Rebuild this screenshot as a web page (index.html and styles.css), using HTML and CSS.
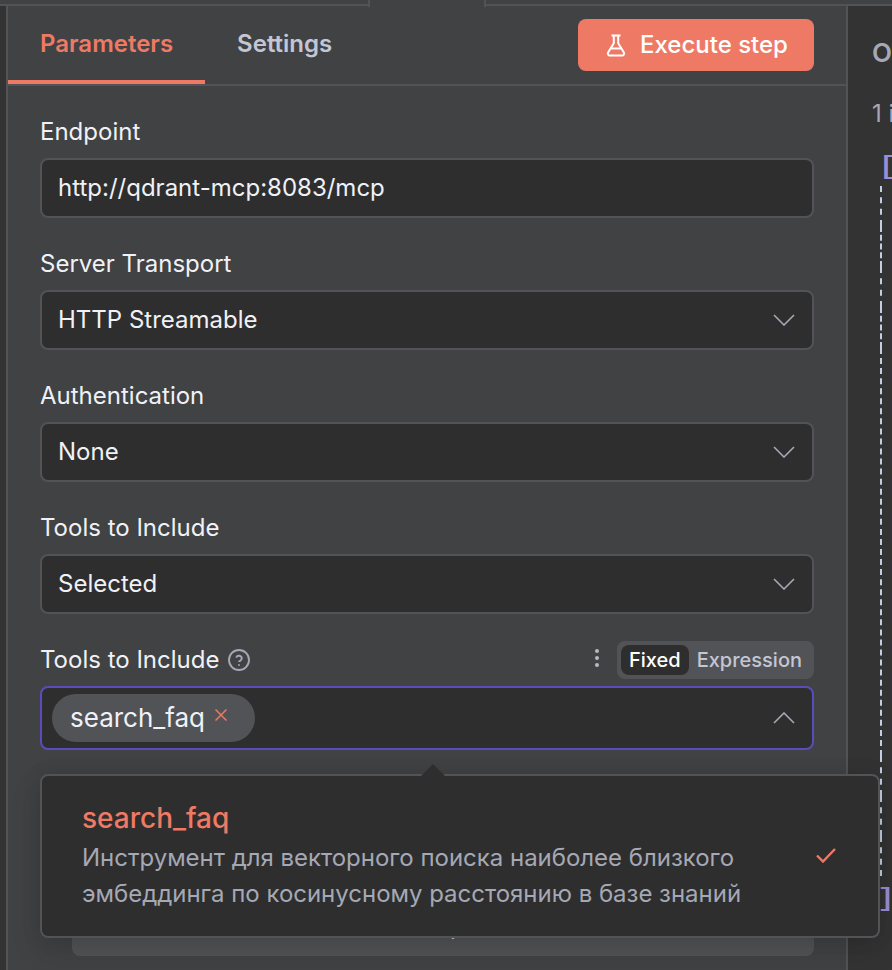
FILE: index.html
```html
<!DOCTYPE html>
<html lang="en">

<head>
  <meta charset="UTF-8" />
  <meta name="viewport" content="width=device-width, initial-scale=1.0" />
  <title>MCP Client Tool</title>
  <link rel="stylesheet" href="styles.css">
</head>

<body>
  <div class="topbar">
    <div class="topbar-line topbar-left"></div>
    <div class="drag-handle"></div>
    <div class="topbar-line topbar-right"></div>
  </div>

  <div class="workspace">
    <div class="input-edge"></div>

    <main class="panel">
      <div class="panel-header">
        <nav class="tabs">
          <a class="tab active">Parameters</a>
          <a class="tab">Settings</a>
        </nav>
        <button class="execute-button">
          <svg class="flask" viewBox="0 0 24 24" width="24" height="24">
            <path d="M7.5 2.6h9M9.8 3v7.2L4.1 19.4a2.1 2.1 0 0 0 1.8 3.1h12.2a2.1 2.1 0 0 0 1.8-3.1L14.2 10.2V3M7 15.5h10" />
          </svg>
          <span>Execute step</span>
        </button>
      </div>

      <div class="form">
        <div class="field">
          <label class="label">Endpoint</label>
          <div class="control">http://qdrant-mcp:8083/mcp</div>
        </div>

        <div class="field">
          <label class="label">Server Transport</label>
          <div class="control">
            <span>HTTP Streamable</span>
            <svg class="chevron" viewBox="0 0 22 12" width="22" height="12"><path d="M1 1l10 10L21 1" /></svg>
          </div>
        </div>

        <div class="field">
          <label class="label">Authentication</label>
          <div class="control">
            <span>None</span>
            <svg class="chevron" viewBox="0 0 22 12" width="22" height="12"><path d="M1 1l10 10L21 1" /></svg>
          </div>
        </div>

        <div class="field">
          <label class="label">Tools to Include</label>
          <div class="control">
            <span>Selected</span>
            <svg class="chevron" viewBox="0 0 22 12" width="22" height="12"><path d="M1 1l10 10L21 1" /></svg>
          </div>
        </div>

        <div class="field field-tools">
          <div class="label">
            <span>Tools to Include</span>
            <svg class="help" viewBox="0 0 22 22" width="22" height="22">
              <circle cx="11" cy="11" r="10" />
              <path d="M8.2 8.6a2.9 2.9 0 0 1 5.6.9c0 1.9-2.8 2.3-2.8 3.6M11 15.2v1.6" />
            </svg>
            <svg class="dots" viewBox="0 0 4 18" width="4" height="18">
              <circle cx="2" cy="2" r="2" /><circle cx="2" cy="9" r="2" /><circle cx="2" cy="16" r="2" />
            </svg>
            <div class="switch">
              <span class="switch-item selected">Fixed</span>
              <span class="switch-item">Expression</span>
            </div>
          </div>
          <div class="control focused">
            <span class="tag">
              search_faq
              <svg class="tag-close" viewBox="0 0 12 12" width="12" height="12"><path d="M.5.5l11 11M11.5.5l-11 11" /></svg>
            </span>
            <svg class="chevron" viewBox="0 0 22 12" width="22" height="12"><path d="M1 11L11 1l10 10" /></svg>
          </div>

          <!-- dropdown -->
          <div class="dropdown">
            <div class="option">
              <div class="option-name">search_faq</div>
              <div class="option-description">Инструмент для векторного поиска наиболее близкого эмбеддинга по косинусному расстоянию в базе знаний</div>
            </div>
            <svg class="check" viewBox="0 0 20 15" width="20" height="15"><path d="M1 7.5l6 6L19 1" /></svg>
          </div>
        </div>

        <button class="add-option">Add Option</button>
      </div>
    </main>

    <aside class="output">
      <div class="output-title">OUTPUT</div>
      <div class="output-count">1 item</div>
      <div class="json">
        <span class="bracket">[</span>
        <div class="json-row"></div>
        <div class="json-row tall"></div>
        <div class="json-row"></div>
        <div class="json-row tall"></div>
        <div class="json-row text-row"></div>
        <div class="json-row"></div>
        <div class="json-row"></div>
        <div class="json-row"></div>
        <span class="bracket bracket-close">]</span>
      </div>
    </aside>
  </div>
</body>

</html>
```

FILE: styles.css
```css
* {
  box-sizing: border-box;
}

body {
  margin: 0;
  height: 970px;
  overflow: hidden;
  background: #414244;
  color: #f0f1f7;
  font-family: Inter, sans-serif;
  font-size: 24px;
  line-height: 36px;
}

button {
  border: none;
  font: inherit;
  color: inherit;
}

svg {
  fill: none;
  flex-shrink: 0;
}

/* top edge with the drag handle */
.topbar {
  display: flex;
  height: 6px;
}

.topbar-line {
  border-bottom: 2px solid #525356;
}

.topbar-left {
  width: 368px;
}

.topbar-right {
  flex: 1;
}

.drag-handle {
  width: 118px;
  height: 7px;
  border: solid #525356;
  border-width: 0 2px;
}

.workspace {
  display: flex;
  height: 964px;
}

.input-edge {
  width: 6px;
  background: #333;
}

.panel {
  width: 842px;
  border: solid #525356;
  border-width: 0 2px;
}

.panel-header {
  display: flex;
  justify-content: space-between;
  height: 80px;
  padding-right: 32px;
  border-bottom: 2px solid #525356;
}

.tabs {
  display: flex;
}

.tab {
  height: 78px;
  padding: 20px 32px 0;
  color: #c3c6d4;
  font-weight: 600;
}

.tab.active {
  color: #ee7a66;
  border-bottom: 4px solid #ee7a66;
}

.execute-button {
  display: flex;
  align-items: center;
  gap: 12px;
  width: 236px;
  height: 52px;
  margin-top: 13px;
  padding: 0 26px;
  border-radius: 8px;
  background: #ee7a66;
  color: #fff;
  font-weight: 500;
  white-space: nowrap;
}

.flask {
  stroke: #fff;
  stroke-width: 2;
}

/* parameters */
.form {
  padding: 28px 32px 0;
}

.field {
  margin-bottom: 28px;
}

.label {
  display: flex;
  align-items: center;
  height: 36px;
  margin-bottom: 8px;
}

.control {
  display: flex;
  align-items: center;
  justify-content: space-between;
  height: 60px;
  padding: 0 17px 0 16px;
  border: 2px solid #525356;
  border-radius: 8px;
  background: #2e2e2e;
}

.chevron {
  stroke: #a5a8b5;
  stroke-width: 1.6;
}

.help {
  margin-left: 9px;
  stroke: #a5a8b5;
  stroke-width: 1.9;
}

.dots {
  margin: -4px 18px 0 auto;
  fill: #b5b8c5;
}

.switch {
  display: flex;
  height: 38px;
  padding: 4px;
  border-radius: 8px;
  background: #525356;
  font-size: 20px;
  line-height: 30px;
  font-weight: 500;
}

.switch-item {
  padding: 0 8px;
  border-radius: 8px;
  color: #c3c6d4;
}

.switch-item.selected {
  background: #2e2e2e;
  color: #fff;
}

.field-tools {
  position: relative;
}

.control.focused {
  height: 64px;
  padding-left: 10px;
  border-color: #5a4cba;
}

.tag {
  display: flex;
  align-items: center;
  gap: 10px;
  width: 203px;
  height: 48px;
  padding: 0 0 0 18px;
  border-radius: 24px;
  background: #525356;
  font-size: 26px;
}

.tag-close {
  margin-top: -6px;
  stroke: #ee7a66;
  stroke-width: 1.5;
}

.dropdown {
  position: absolute;
  top: 132px;
  left: 0;
  z-index: 10;
  display: flex;
  align-items: center;
  justify-content: space-between;
  width: 840px;
  height: 164px;
  padding: 0 42px 0 40px;
  border: 2px solid #525356;
  border-radius: 8px;
  background: #2e2e2e;
  box-shadow: 0 12px 32px rgba(0, 0, 0, 0.12), 0 0 20px rgba(0, 0, 0, 0.1);
}

.dropdown::before {
  content: "";
  position: absolute;
  top: -12px;
  left: 379px;
  border: solid transparent;
  border-width: 0 12px 12px;
  border-bottom-color: #2e2e2e;
}

.option {
  width: 680px;
  padding-bottom: 3px;
}

.option-name {
  margin-bottom: 1px;
  color: #ee7a66;
  font-size: 28px;
  font-weight: 500;
  line-height: 41px;
}

.option-description {
  color: #a5a8b5;
  letter-spacing: -0.02px;
}

.check {
  margin-bottom: 1px;
  stroke: #ee7a66;
  stroke-width: 2.4;
}

.add-option {
  display: block;
  width: 742px;
  height: 60px;
  margin: 146px 0 0 32px;
  border-radius: 8px;
  background: #525356;
}

/* output */
.output {
  flex: 1;
  padding: 29px 0 0 24px;
  overflow: hidden;
  background: #333;
  color: #a5a8b5;
  white-space: nowrap;
}

.output-title {
  font-size: 26px;
  font-weight: 600;
  letter-spacing: 3px;
}

.output-count {
  margin-top: 25px;
}

.json {
  margin: 16px 0 0 8px;
}

.bracket {
  display: block;
  height: 38px;
  margin-left: -5px;
  color: #9a8fd6;
  font-family: "DejaVu Sans Mono", monospace;
  font-size: 27px;
  transform: scaleX(1.5);
  transform-origin: left;
}

.bracket-close {
  margin: 4px 0 0 -6px;
}

.json-row {
  height: 40px;
  border-left: 2px dashed #c3cfe0;
}

.json-row.tall {
  height: 41px;
}

.json-row.text-row {
  height: 408px;
}
```
